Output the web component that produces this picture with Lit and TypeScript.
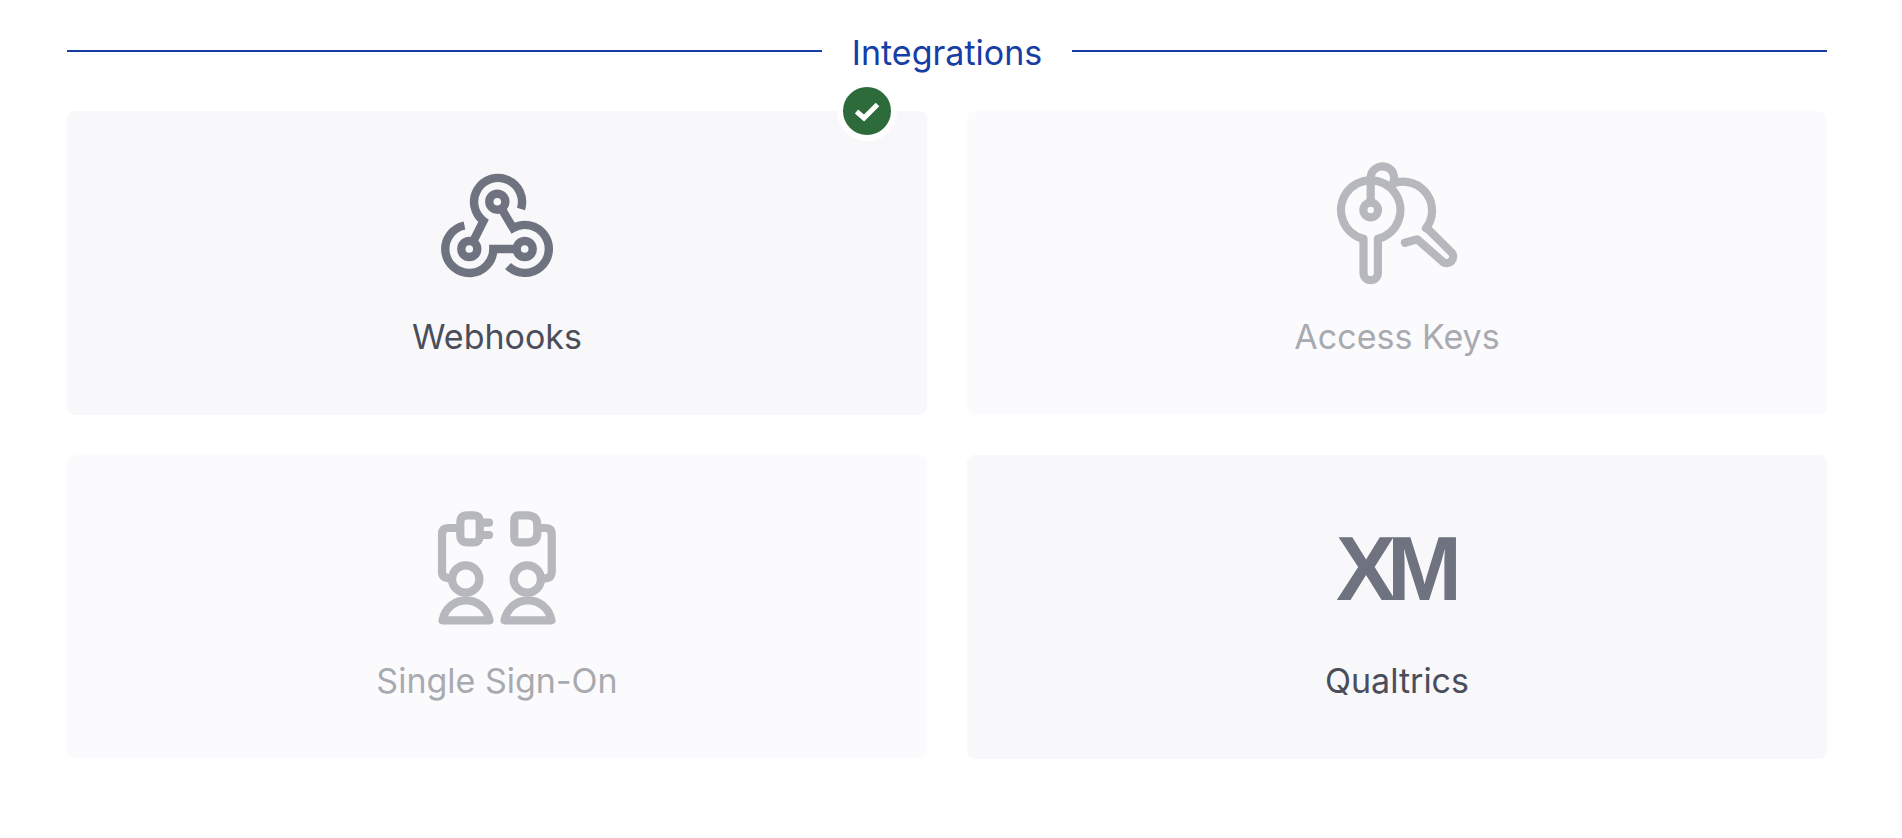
import { LitElement, html, css, svg } from "lit";
import { customElement } from "lit/decorators.js";
import { classMap } from "lit/directives/class-map.js";

const webhookIcon = svg`
  <path d="M88 48A24 24 0 1 0 50.5 60L36.3 88" />
  <path d="M31.5 64.5A24 24 0 1 0 60.3 88H91.7" />
  <path d="M75 105A24 24 0 1 0 80 67L64.3 40.7" />
  <circle class="hole" cx="64.3" cy="40.7" r="8" />
  <circle class="hole" cx="36.3" cy="88" r="8" />
  <circle class="hole" cx="91.7" cy="88" r="8" />
`;

const keysIcon = svg`
  <path d="M62 21.7A29 29 0 0 1 93 67.3" />
  <path d="M95.3 68.3L118.7 91.7A6.4 6.4 0 0 1 109.7 100.7L84.3 78.3L72 81.7" />
  <path d="M37.7 42V17.3A11.7 11.7 0 1 1 58 25" />
  <path d="M30.5 77.8A29.7 29.7 0 1 1 44.9 77.8V112A7.2 7.2 0 0 1 30.5 112Z" />
  <circle cx="37.7" cy="49" r="7.3" />
`;

const ssoIcon = svg`
  <path d="M34 10.3H41Q46.7 10.3 46.7 17V31Q46.7 37.3 41 37.3H34Q27.3 37.3 27.3 30V18Q27.3 10.3 34 10.3Z" />
  <path d="M48 17.7H56M48 30H56" />
  <path d="M27 23H15Q9 23 9 29V67Q9 73 17 73.3" />
  <circle cx="32.7" cy="74" r="13.7" />
  <path d="M9.5 115.3C12 103 22 95.3 33 95.3S54 103 56.5 115.3Z" />
  <path d="M86 10.3H94Q104.3 10.3 104.3 20V28Q104.3 37.3 94 37.3H86Q81.3 37.3 81.3 32V16Q81.3 10.3 86 10.3Z" />
  <path d="M105 23H112.7Q118.7 23 118.7 29V67Q118.7 73 112 73.3" />
  <circle cx="94.3" cy="74" r="13.7" />
  <path d="M71.5 115.3C74 103 84 95.3 95 95.3S116 103 118.5 115.3Z" />
`;

@customElement("app-root")
export class AppRoot extends LitElement {
  static styles = css`
    :host {
      display: block;
      font-family: Inter, "Liberation Sans", sans-serif;
    }

    .page {
      padding: 33px 75px 0 67px;
    }

    .heading {
      display: flex;
      align-items: center;
      gap: 30px;
      height: 40px;
      font-size: 34px;
      line-height: 40px;
      color: #173ea5;
    }

    .heading__rule {
      flex: 1;
      height: 2px;
      margin-top: -4px;
      background-color: #173ea5;
    }

    .grid {
      display: grid;
      grid-template-columns: 1fr 1fr;
      gap: 40px;
      margin-top: 38px;
    }

    .card {
      position: relative;
      display: flex;
      flex-direction: column;
      align-items: center;
      gap: 28px;
      padding: 50px 0 58px;
      border-radius: 8px;
      background-color: #f8f8fb;
      color: #4b4e5a;
      font-size: 34px;
      line-height: 40px;
    }

    .card--off {
      background-color: #fbfbfd;
      color: #a8aab0;
    }

    .card__icon {
      display: flex;
      align-items: center;
      justify-content: center;
      width: 128px;
      height: 128px;
      color: #6f7380;
    }

    .card--off .card__icon {
      color: #b6b8bd;
    }

    .card__icon svg {
      display: block;
      fill: none;
      stroke: currentColor;
      stroke-width: 8.2;
      stroke-linecap: round;
      stroke-linejoin: round;
    }

    .card__icon--sharp svg {
      stroke-width: 8.4;
      stroke-linecap: butt;
      stroke-linejoin: miter;
    }

    .hole {
      fill: #f8f8fb;
    }

    .xm {
      font-family: "Liberation Sans", Arial, sans-serif;
      font-size: 90px;
      font-weight: 700;
      line-height: 128px;
      letter-spacing: -0.1em;
      margin: -1px 0 0 -5px;
    }

    .badge {
      position: absolute;
      top: -30px;
      right: 30px;
      width: 48px;
      height: 48px;
      border: 6px solid #fff;
      border-radius: 50%;
      background-color: #2e6b3b;
    }

    .badge svg {
      display: block;
      fill: none;
      stroke: #fff;
      stroke-width: 5;
    }
  `;

  renderCard(label: string, icon: unknown, off = false, sharp = false, badge = false) {
    return html`
      <div class=${classMap({ card: true, "card--off": off })}>
        ${badge
          ? html`<div class="badge">
              <svg width="48" height="48" viewBox="0 0 48 48"><path d="M13.5 24.5L21 31L34.5 17.5" /></svg>
            </div>`
          : ""}
        <div class=${classMap({ card__icon: true, "card__icon--sharp": sharp })}>${icon}</div>
        <div>${label}</div>
      </div>
    `;
  }

  iconSvg(content: unknown) {
    return html`<svg width="128" height="128" viewBox="0 0 128 128">${content}</svg>`;
  }

  render() {
    return html`
      <div class="page">
        <div class="heading">
          <div class="heading__rule"></div>
          <div>Integrations</div>
          <div class="heading__rule"></div>
        </div>
        <div class="grid">
          ${this.renderCard("Webhooks", this.iconSvg(webhookIcon), false, true, true)}
          ${this.renderCard("Access Keys", this.iconSvg(keysIcon), true)}
          ${this.renderCard("Single Sign-On", this.iconSvg(ssoIcon), true)}
          ${this.renderCard("Qualtrics", html`<div class="xm">XM</div>`)}
        </div>
      </div>
    `;
  }
}
